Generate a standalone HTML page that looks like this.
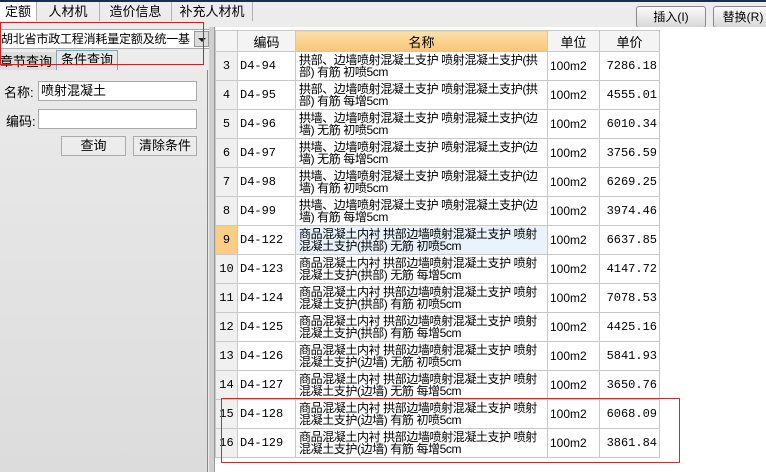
<!DOCTYPE html>
<html><head><meta charset="utf-8"><style>
*{margin:0;padding:0;box-sizing:border-box}
body{width:766px;height:472px;overflow:hidden;background:#ececec;font-family:"Liberation Sans","Noto Sans CJK SC","WenQuanYi Zen Hei",sans-serif;font-size:12px;color:#000;position:relative}
.a{position:absolute}
.tab{position:absolute;top:2px;height:19px;line-height:19px;text-align:center;border-right:1px solid #b0b0b0;font-size:13px}
.btn{position:absolute;background:linear-gradient(#fafafa,#d8d8d8);border:1px solid #8a8a8a;border-radius:3px;text-align:center;font-size:12px}
table{position:absolute;left:215px;top:30px;border-collapse:collapse;background:#fff}
td{border:1px solid #c8c8c8;height:29px;font-size:12px;line-height:12px;vertical-align:middle;padding:0 2px}
th{border:1px solid #c8c8c8;height:21px;font-weight:normal;font-size:13px;background:#f4f4f4}
td.n{background:#f0f0f0;text-align:center;font-family:"Liberation Mono","Noto Sans CJK SC",monospace}
td.c{font-family:"Liberation Mono","Noto Sans CJK SC",monospace}
td.p{text-align:right;font-family:"Liberation Mono",monospace}
td.nm{white-space:nowrap;letter-spacing:-0.4px;padding-left:3px}
</style></head><body>
<div class="a" style="left:0;top:0;width:766px;height:2px;background:#1c2c50"></div>
<div class="tab" style="left:0;width:37px;background:#fff">定额</div>
<div class="tab" style="left:37px;width:63px">人材机</div>
<div class="tab" style="left:100px;width:72px">造价信息</div>
<div class="tab" style="left:172px;width:81px">补充人材机</div>
<div class="btn" style="left:636px;top:6px;width:70px;height:22px;line-height:20px">插入(I)</div>
<div class="btn" style="left:713px;top:6px;width:60px;height:22px;line-height:20px">替换(R)</div>
<div class="a" style="left:0;top:27px;width:210px;height:445px;background:#ececec"></div>
<div class="a" style="left:0;top:29px;width:212px;height:20px;background:#fff;border:1px solid #aaa;font-size:12px;line-height:18px;white-space:nowrap;overflow:hidden;letter-spacing:-0.2px">胡北省市政工程消耗量定额及统一基</div>
<div class="a" style="left:194px;top:31px;width:15px;height:16px;background:#dcdcdc;border:1px solid #999"><div class="a" style="left:3px;top:6px;border-left:4px solid transparent;border-right:4px solid transparent;border-top:4px solid #223"></div></div>
<div class="a" style="left:0;top:52px;width:56px;height:18px;background:#ddd;font-size:13px;line-height:20px">章节查询</div>
<div class="a" style="left:56px;top:50px;width:62px;height:21px;background:#e8e8e8;border:1px solid #7ab;border-bottom:none;font-size:13px;line-height:18px;text-align:center">条件查询</div>
<div class="a" style="left:0;top:70px;width:208px;height:402px;background:linear-gradient(#eaeaea,#dcdcdc);border-right:1px solid #888"></div>
<div class="a" style="left:4px;top:82px;font-size:13px">名称:</div>
<div class="a" style="left:38px;top:81px;width:159px;height:20px;background:#fff;border:1px solid #aaa;font-size:13px;line-height:18px;padding-left:2px">喷射混凝土</div>
<div class="a" style="left:6px;top:111px;font-size:13px">编码:</div>
<div class="a" style="left:38px;top:109px;width:159px;height:20px;background:#fff;border:1px solid #aaa"></div>
<div class="a" style="left:61px;top:136px;width:65px;height:20px;background:#ececec;border:1px solid #aaa;text-align:center;font-size:13px;line-height:18px">查询</div>
<div class="a" style="left:133px;top:136px;width:64px;height:20px;background:#ececec;border:1px solid #aaa;text-align:center;font-size:13px;line-height:18px">清除条件</div>
<div class="a" style="left:209px;top:27px;width:6px;height:445px;background:#cfcfcf;border-right:1px solid #999"></div>
<div class="a" style="left:215px;top:27px;width:551px;height:445px;background:#fff"></div>
<table>
<tr><th style="width:22px"></th><th style="width:58px">编码</th><th style="width:252px;background:linear-gradient(#fde0a8,#f7c777)">名称</th><th style="width:52px">单位</th><th style="width:60px">单价</th></tr>
<tr><td class="n">3</td><td class="c">D4-94</td><td class="nm">拱部、边墙喷射混凝土支护 喷射混凝土支护(拱<br>部) 有筋 初喷5cm</td><td>100m2</td><td class="p">7286.18</td></tr>
<tr><td class="n">4</td><td class="c">D4-95</td><td class="nm">拱部、边墙喷射混凝土支护 喷射混凝土支护(拱<br>部) 有筋 每增5cm</td><td>100m2</td><td class="p">4555.01</td></tr>
<tr><td class="n">5</td><td class="c">D4-96</td><td class="nm">拱墙、边墙喷射混凝土支护 喷射混凝土支护(边<br>墙) 无筋 初喷5cm</td><td>100m2</td><td class="p">6010.34</td></tr>
<tr><td class="n">6</td><td class="c">D4-97</td><td class="nm">拱墙、边墙喷射混凝土支护 喷射混凝土支护(边<br>墙) 无筋 每增5cm</td><td>100m2</td><td class="p">3756.59</td></tr>
<tr><td class="n">7</td><td class="c">D4-98</td><td class="nm">拱墙、边墙喷射混凝土支护 喷射混凝土支护(边<br>墙) 有筋 初喷5cm</td><td>100m2</td><td class="p">6269.25</td></tr>
<tr><td class="n">8</td><td class="c">D4-99</td><td class="nm">拱墙、边墙喷射混凝土支护 喷射混凝土支护(边<br>墙) 有筋 每增5cm</td><td>100m2</td><td class="p">3974.46</td></tr>
<tr><td class="n" style="background:#fbcd85">9</td><td class="c">D4-122</td><td class="nm" style="background:#eaf3fc">商品混凝土内衬 拱部边墙喷射混凝土支护 喷射<br>混凝土支护(拱部) 无筋 初喷5cm</td><td>100m2</td><td class="p">6637.85</td></tr>
<tr><td class="n">10</td><td class="c">D4-123</td><td class="nm">商品混凝土内衬 拱部边墙喷射混凝土支护 喷射<br>混凝土支护(拱部) 无筋 每增5cm</td><td>100m2</td><td class="p">4147.72</td></tr>
<tr><td class="n">11</td><td class="c">D4-124</td><td class="nm">商品混凝土内衬 拱部边墙喷射混凝土支护 喷射<br>混凝土支护(拱部) 有筋 初喷5cm</td><td>100m2</td><td class="p">7078.53</td></tr>
<tr><td class="n">12</td><td class="c">D4-125</td><td class="nm">商品混凝土内衬 拱部边墙喷射混凝土支护 喷射<br>混凝土支护(拱部) 有筋 每增5cm</td><td>100m2</td><td class="p">4425.16</td></tr>
<tr><td class="n">13</td><td class="c">D4-126</td><td class="nm">商品混凝土内衬 拱部边墙喷射混凝土支护 喷射<br>混凝土支护(边墙) 无筋 初喷5cm</td><td>100m2</td><td class="p">5841.93</td></tr>
<tr><td class="n">14</td><td class="c">D4-127</td><td class="nm">商品混凝土内衬 拱部边墙喷射混凝土支护 喷射<br>混凝土支护(边墙) 无筋 每增5cm</td><td>100m2</td><td class="p">3650.76</td></tr>
<tr><td class="n">15</td><td class="c">D4-128</td><td class="nm">商品混凝土内衬 拱部边墙喷射混凝土支护 喷射<br>混凝土支护(边墙) 有筋 初喷5cm</td><td>100m2</td><td class="p">6068.09</td></tr>
<tr><td class="n">16</td><td class="c">D4-129</td><td class="nm">商品混凝土内衬 拱部边墙喷射混凝土支护 喷射<br>混凝土支护(边墙) 有筋 每增5cm</td><td>100m2</td><td class="p">3861.84</td></tr>
</table>
<div class="a" style="left:0;top:22px;width:204px;height:43px;border:1px solid #d02020"></div>
<div class="a" style="left:221px;top:398px;width:459px;height:65px;border:1px solid #c03030"></div>
</body></html>
